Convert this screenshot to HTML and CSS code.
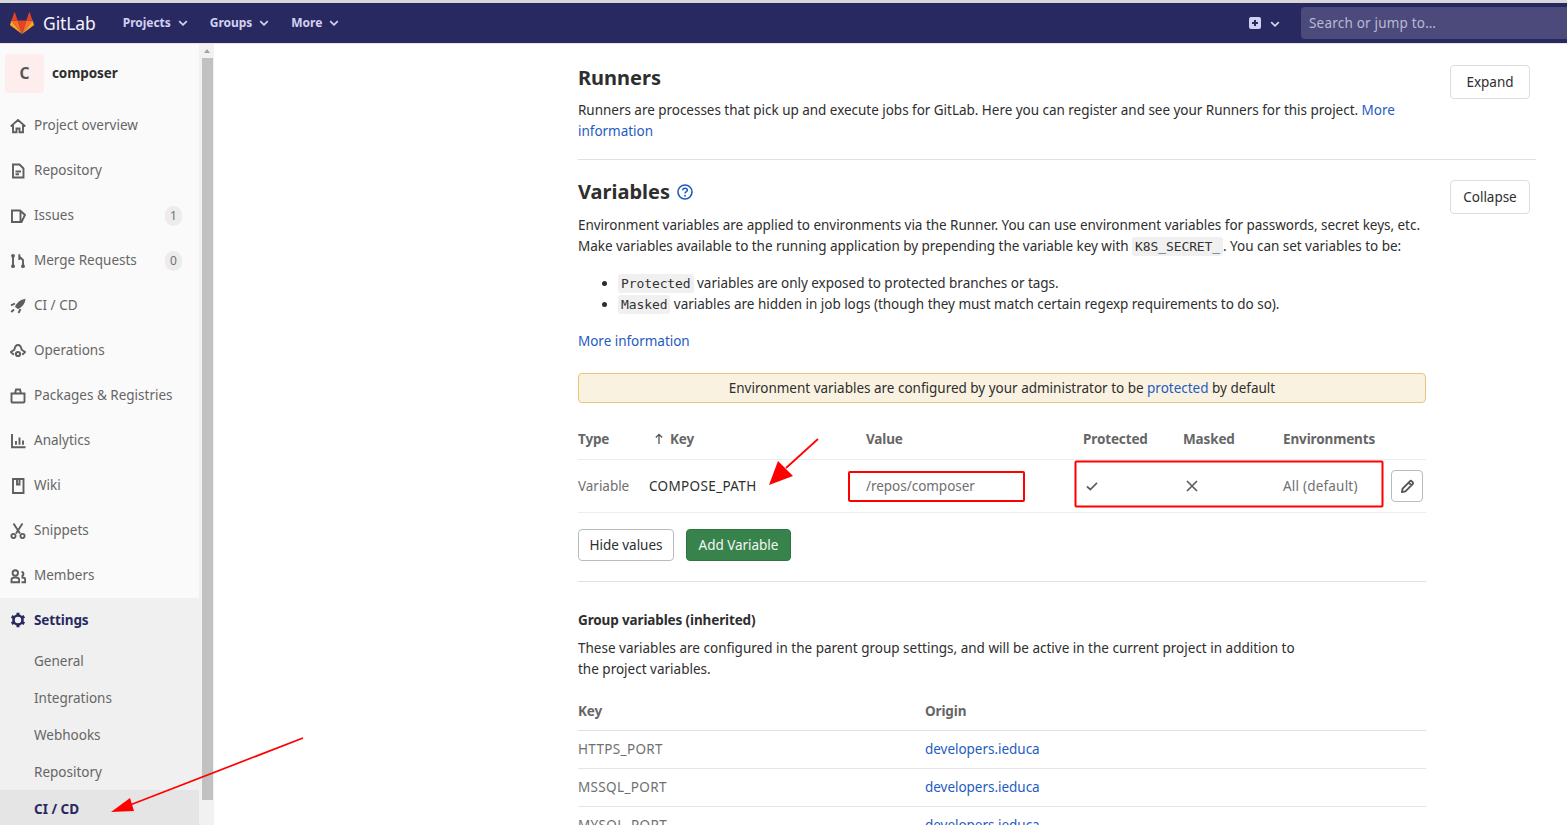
FILE: index.html
```html
<!DOCTYPE html>
<html lang="en">
<head>
<meta charset="utf-8">
<title>CI / CD Settings · composer · GitLab</title>
<link rel="stylesheet" href="styles.css">
</head>
<body>
<header class="topbar">
  <a class="brand">
    <svg class="tanuki" viewBox="0 0 24 22" width="24" height="22">
      <polygon fill="#e24329" points="12,22 16.4,8.4 7.6,8.4"/>
      <polygon fill="#fc6d26" points="12,22 7.6,8.4 1.4,8.4"/>
      <polygon fill="#fca326" points="1.4,8.4 0.1,12.5 0.5,13.6 12,22"/>
      <polygon fill="#e24329" points="1.4,8.4 7.6,8.4 4.9,0.2 4.4,0.2"/>
      <polygon fill="#fc6d26" points="12,22 16.4,8.4 22.6,8.4"/>
      <polygon fill="#fca326" points="22.6,8.4 23.9,12.5 23.5,13.6 12,22"/>
      <polygon fill="#e24329" points="22.6,8.4 16.4,8.4 19.1,0.2 19.6,0.2"/>
    </svg>
    <span class="brand-name">GitLab</span>
  </a>
  <nav class="topnav">
    <a class="topnav-item">Projects <svg class="chev" viewBox="0 0 10 6"><path d="M1.2 1.2 5 4.8l3.8-3.6"/></svg></a>
    <a class="topnav-item">Groups <svg class="chev" viewBox="0 0 10 6"><path d="M1.2 1.2 5 4.8l3.8-3.6"/></svg></a>
    <a class="topnav-item">More <svg class="chev" viewBox="0 0 10 6"><path d="M1.2 1.2 5 4.8l3.8-3.6"/></svg></a>
  </nav>
  <div class="topbar-right">
    <a class="new-menu">
      <svg class="plus" viewBox="0 0 12 12"><path fill="#d1d1f0" fill-rule="evenodd" d="M2 0h8a2 2 0 0 1 2 2v8a2 2 0 0 1-2 2H2a2 2 0 0 1-2-2V2a2 2 0 0 1 2-2zm3 3v2H3v2h2v2h2V7h2V5H7V3z"/></svg>
      <svg class="chev" viewBox="0 0 10 6"><path d="M1.2 1.2 5 4.8l3.8-3.6"/></svg>
    </a>
    <div class="search">Search or jump to…</div>
  </div>
</header>

<div class="layout">
  <aside class="sidebar">
    <div class="sidebar-inner">
      <div class="context">
        <div class="avatar">C</div>
        <div class="context-name">composer</div>
      </div>
      <ul class="menu">
        <li class="menu-item">
          <svg class="ico" viewBox="0 0 16 16"><path class="ln" d="M.7 8.400 8 2l7.300 6.400M3 7v7.200h3.500v-3.700h3V14.200H13V7"/></svg>Project overview</li>
        <li class="menu-item">
          <svg class="ico" viewBox="0 0 16 16"><path class="ln" d="M3 1.500h6.500L13.500 5.500V14.500H3zM5.500 8.500h5.500M5.500 11.300h3.500"/></svg>Repository</li>
        <li class="menu-item">
          <svg class="ico" viewBox="0 0 16 16"><path class="ln" d="M2 2.500h8L15 7l-3.500 7H2zM10.500 2.500v11.500"/></svg>Issues<span class="badge">1</span></li>
        <li class="menu-item">
          <svg class="ico" viewBox="0 0 16 16"><path class="ln" d="M3 4v8M13 6.500V12M13 7 10 4.200h-1M9.300 1.300v5.600"/><circle class="dot" cx="3" cy="2.800" r="1.900"/><circle class="dot" cx="3" cy="13.200" r="1.900"/><circle class="dot" cx="13" cy="13.200" r="1.900"/></svg>Merge Requests<span class="badge">0</span></li>
        <li class="menu-item">
          <svg class="ico" viewBox="0 0 16 16"><path class="dot" d="M5 9C6.500 4.500 10.500 1.800 15.500 .8c-.5 5-3.200 8.200-7.500 10.200z"/><path class="ln" d="M5 5.500 1 7.300M10.500 11 8.500 15M4 11.500 1.200 14"/></svg>CI / CD</li>
        <li class="menu-item">
          <svg class="ico" viewBox="0 0 16 16"><path class="ln" d="M3.800 11.800.9 9l3.400-2.200C4.800 3.800 6.200 2 8 2s3.200 1.800 3.700 4.800L15.100 9l-2.900 2.800"/><circle class="dot" cx="8" cy="11" r="3.100"/><circle class="hole" cx="8" cy="11" r="1.100"/></svg>Operations</li>
        <li class="menu-item">
          <svg class="ico" viewBox="0 0 16 16"><path class="ln" d="M1.500 5.500h13v8a1 1 0 0 1-1 1h-11a1 1 0 0 1-1-1zM5 5.500l1-4h4l1 4"/></svg>Packages &amp; Registries</li>
        <li class="menu-item">
          <svg class="ico" viewBox="0 0 16 16"><path class="ln" d="M2 1V14.200h13.500M6 8v3.800M9.500 4.500v7.300M13 7.500v4.300"/></svg>Analytics</li>
        <li class="menu-item">
          <svg class="ico" viewBox="0 0 16 16"><path class="ln" d="M3 1h10.500v14H3zM7 1v5.500h2.500V1"/></svg>Wiki</li>
        <li class="menu-item">
          <svg class="ico" viewBox="0 0 16 16"><path class="ln" d="M3.500 .5 10 10.500M12.500 .5 6 10.500"/><circle class="ring" cx="3.500" cy="13" r="2.100"/><circle class="ring" cx="12.500" cy="13" r="2.100"/></svg>Snippets</li>
        <li class="menu-item">
          <svg class="ico" viewBox="0 0 16 16"><circle class="ring" cx="5.300" cy="5" r="2.700"/><path class="ln" d="M1.500 14.300v-2.800c0-1.300 1.300-2 3.800-2s3.800.7 3.800 2v2.800zM11.500 4a1.900 1.900 0 0 1 0 3.800M11.500 9.500c2.400 0 3.700.7 3.700 2v2.800h-3.700"/></svg>Members</li>
      </ul>
      <div class="settings-group">
        <div class="menu-item menu-item-active">
          <svg class="ico" viewBox="0 0 16 16"><circle class="gear-ring" cx="8" cy="8" r="4.500"/><path class="gear-teeth" d="M8 3V.7M8 13v2.300M12.330 5.500 14.300 4.350M3.670 5.500 1.700 4.350M12.330 10.500 14.300 11.650M3.670 10.500 1.700 11.650"/></svg>Settings</div>
        <ul class="submenu">
          <li class="submenu-item">General</li>
          <li class="submenu-item">Integrations</li>
          <li class="submenu-item">Webhooks</li>
          <li class="submenu-item">Repository</li>
          <li class="submenu-item submenu-item-active">CI / CD</li>
        </ul>
      </div>
    </div>
    <div class="scrollbar">
      <div class="scroll-up"></div>
      <div class="scroll-thumb"></div>
    </div>
  </aside>

  <main class="content">
    <section class="panel panel-runners">
      <div class="panel-head">
        <div class="panel-text">
          <h2 class="panel-title">Runners</h2>
          <p class="para">Runners are processes that pick up and execute jobs for GitLab. Here you can register and see your Runners for this project. <a class="link">More<br>information</a></p>
        </div>
        <button class="btn btn-panel">Expand</button>
      </div>
    </section>

    <section class="panel panel-vars">
      <div class="panel-head">
        <div class="panel-text">
          <h2 class="panel-title">Variables
            <svg class="help" viewBox="0 0 16 16"><circle cx="8" cy="8" r="7" fill="none" stroke="#1f5cbf" stroke-width="1.600"/><path d="M5.700 6.300C5.800 5 6.800 4.300 8 4.300c1.300 0 2.300.8 2.300 1.900 0 1.800-2.300 1.700-2.300 3.300" fill="none" stroke="#1f5cbf" stroke-width="1.500"/><circle cx="8" cy="11.700" r=".95" fill="#1f5cbf"/></svg>
          </h2>
          <p class="para para-wide">Environment variables are applied to environments via the Runner. You can use environment variables for passwords, secret keys, etc.<br>Make variables available to the running application by prepending the variable key with <code class="code">K8S_SECRET_</code>. You can set variables to be:</p>
        </div>
        <button class="btn btn-panel">Collapse</button>
      </div>

      <div class="vars-body">
        <ul class="bullets">
          <li><code class="code">Protected</code> variables are only exposed to protected branches or tags.</li>
          <li><code class="code">Masked</code> variables are hidden in job logs (though they must match certain regexp requirements to do so).</li>
        </ul>
        <p class="para more"><a class="link">More information</a></p>
        <div class="alert">Environment variables are configured by your administrator to be&nbsp;<a class="link">protected</a>&nbsp;by default</div>

        <div class="vt-row vt-head">
          <div>Type</div>
          <div class="vt-key-head"><svg class="sort" viewBox="0 0 10 12"><path d="M5 11V1.500M1.800 4.500 5 1.300l3.200 3.200"/></svg>Key</div>
          <div>Value</div>
          <div>Protected</div>
          <div>Masked</div>
          <div>Environments</div>
        </div>
        <div class="vt-row vt-body">
          <div class="muted">Variable</div>
          <div class="dark caps">COMPOSE_PATH</div>
          <div class="muted">/repos/composer</div>
          <div><svg class="state" viewBox="0 0 12 12"><path d="M1 6.500 4.300 9.500 11 2.800"/></svg></div>
          <div><svg class="state" viewBox="0 0 12 12"><path d="M1 1l10 10M11 1 1 11"/></svg></div>
          <div class="muted env">All (default)</div>
          <button class="btn btn-edit"><svg class="pencil" viewBox="0 0 16 16"><path fill="none" stroke="#555" stroke-width="2" stroke-linejoin="round" d="M2 14l.8-3.800L10.500 2.500a1.500 1.500 0 0 1 2.100 0l.9.900a1.500 1.500 0 0 1 0 2.100L5.800 13.200zM9.200 3.800l3 3"/></svg></button>
        </div>
        <div class="vt-actions">
          <button class="btn btn-hide">Hide values</button>
          <button class="btn btn-add">Add Variable</button>
        </div>
        <hr class="rule">

        <h5 class="sub-title">Group variables (inherited)</h5>
        <p class="para group-text">These variables are configured in the parent group settings, and will be active in the current project in addition to<br>the project variables.</p>

        <div class="gt-row gt-head"><div>Key</div><div>Origin</div></div>
        <div class="gt-row"><div class="muted caps">HTTPS_PORT</div><a class="link">developers.ieduca</a></div>
        <div class="gt-row"><div class="muted caps">MSSQL_PORT</div><a class="link">developers.ieduca</a></div>
        <div class="gt-row"><div class="muted caps">MYSQL_PORT</div><a class="link">developers.ieduca</a></div>
      </div>
    </section>
  </main>
</div>

<svg class="annotations" viewBox="0 0 1567 825" width="1567" height="825">
  <rect class="mark" x="849" y="472" width="175" height="29" rx="1"/>
  <rect class="mark" x="1075.500" y="461.500" width="307" height="45" rx="1"/>
  <path class="arrow-line" d="M818 439 786 468"/>
  <polygon class="arrow-head" points="769,485 778,461 793,476"/>
  <path class="arrow-line" d="M303 738 130 805"/>
  <polygon class="arrow-head" points="111,812 130,798 134,811"/>
</svg>
</body>
</html>
```
FILE: styles.css
```css
* { box-sizing: border-box; }
html, body { height: 100%; }
body {
  margin: 0;
  height: 825px;
  overflow: hidden;
  background: #fff;
  color: #2e2e2e;
  font-family: "Noto Sans", "Open Sans", sans-serif;
  font-size: 13.5px;
  letter-spacing: -0.03px;
  line-height: 21px;
  display: flex;
  flex-direction: column;
}
a { text-decoration: none; }
ul { list-style: none; margin: 0; padding: 0; }
p { margin: 0; }
button { font: inherit; letter-spacing: inherit; cursor: pointer; }

/* top bar */
.topbar {
  flex: 0 0 44px;
  display: flex;
  align-items: center;
  background: #292961;
  border-top: 3px solid #d8d8d8;
  border-bottom: 1px solid #e5e5e5;
  padding-left: 10px;
}
.brand { display: flex; align-items: center; color: #f4f4fb; }
.tanuki { flex: none; display: block; }
.brand-name { margin-left: 9px; font-size: 17.5px; letter-spacing: -0.1px; }
.topnav { display: flex; margin-left: 27px; gap: 22px; }
.topnav-item {
  display: flex;
  align-items: center;
  gap: 7px;
  color: #d1d1f0;
  font-size: 12px;
  font-weight: 700;
  letter-spacing: -0.03px;
  margin-top: -2px;
}
.chev { width: 10px; height: 6px; flex: none; margin-top: 2px; }
.chev path { fill: none; stroke: #d1d1f0; stroke-width: 1.8; }
.topbar-right { margin-left: auto; display: flex; align-items: center; }
.new-menu { display: flex; align-items: center; gap: 9px; margin-right: 21px; }
.plus { width: 12px; height: 12px; display: block; }
.search {
  width: 266px;
  height: 32px;
  padding: 6px 8px;
  border-radius: 4px 0 0 4px;
  background: #4c4a7a;
  color: #b9b9d8;
  letter-spacing: 0.2px;
}

.layout { flex: 1; display: flex; min-height: 0; }

/* sidebar */
.sidebar { flex: 0 0 214px; display: flex; overflow: hidden; }
.sidebar-inner { flex: 0 0 199px; background: #fafafa; color: #666; letter-spacing: 0; }
.context { display: flex; align-items: center; height: 59px; padding: 0 0 1px 5px; }
.avatar {
  width: 39px;
  height: 39px;
  border-radius: 4px;
  background: #fdeded;
  color: #555;
  font-size: 15.5px;
  font-weight: 700;
  display: flex;
  align-items: center;
  justify-content: center;
}
.context-name { margin-left: 8px; color: #2e2e2e; font-weight: 700; letter-spacing: -0.1px; }
.menu-item {
  position: relative;
  height: 45px;
  display: flex;
  align-items: center;
  padding-left: 10px;
}
.ico { width: 16px; height: 16px; margin-right: 8px; flex: none; }
.ln, .ring { fill: none; stroke: #5e5e5e; stroke-width: 1.9; }
.dot { fill: #5e5e5e; }
.hole { fill: #fafafa; }
.gear-ring { fill: none; stroke: #292961; stroke-width: 2.6; }
.gear-teeth { fill: none; stroke: #292961; stroke-width: 3; }
.badge {
  position: absolute;
  left: 165px;
  top: 13px;
  width: 17px;
  height: 20px;
  border-radius: 9px;
  background: #ececec;
  color: #707070;
  font-size: 12px;
  line-height: 20px;
  text-align: center;
}
.settings-group { background: #f0f0f0; height: 229px; }
.menu-item-active { color: #292961; font-weight: 700; height: 44px; letter-spacing: -0.1px; }
.submenu-item { height: 37px; padding-left: 34px; line-height: 38px; }
.submenu-item-active { background: #e5e5e5; color: #292961; font-weight: 700; letter-spacing: 0; }

/* fake native scrollbar */
.scrollbar { flex: 0 0 15px; background: #f1f1f1; display: flex; flex-direction: column; align-items: center; padding-left: 1px; }
.scroll-up {
  width: 0;
  height: 0;
  margin-top: 5px;
  border-left: 3.5px solid transparent;
  border-right: 3.5px solid transparent;
  border-bottom: 4px solid #a3a3a3;
}
.scroll-thumb { width: 11px; height: 742px; margin-top: 5px; background: #c1c1c1; flex: none; }

/* main */
.content { flex: 1; min-width: 0; padding: 0 31px 0 364px; }
.panel-runners { height: 116px; border-bottom: 1px solid #e0e0e0; padding-top: 20px; }
.panel-vars { padding-top: 19px; }
.panel-head { display: flex; align-items: flex-start; justify-content: space-between; padding-right: 6px; }
.panel-text { flex: 1; min-width: 0; }
.panel-title {
  margin: 0;
  font-size: 20px;
  font-weight: 700;
  line-height: 28px;
  letter-spacing: 0;
  display: flex;
  align-items: center;
  gap: 7px;
  color: #2e2e2e;
}
.panel-runners .panel-title { margin-bottom: 8px; }
.panel-vars .panel-title { margin-bottom: 9px; margin-top: -1px; }
.panel-vars .panel-head { height: 98px; }
.panel-runners .btn-panel { margin-top: 1px; }
.panel-vars .btn-panel { margin-top: 1px; }
.para-wide { white-space: nowrap; }
.help { width: 16px; height: 16px; flex: none; margin-top: -1px; }
.link { color: #1f5cbf; }
.btn {
  background: #fff;
  border: 1px solid #ddd;
  border-radius: 4px;
  color: #2e2e2e;
  padding: 0;
}
.btn-panel { flex: none; width: 80px; height: 34px; }
.code {
  font-family: "DejaVu Sans Mono", "Liberation Mono", monospace;
  font-size: 13px;
  letter-spacing: -0.1px;
  background: #f0f0f0;
  border-radius: 3px;
  padding: 2px 3px;
  color: #333;
}

.vars-body { width: 848px; }
.bullets { list-style: disc; padding-left: 40px; margin-top: -4px; }
.bullets li { height: 21px; }
.more { margin-top: 16px; }
.alert {
  margin-top: 21px;
  height: 30px;
  display: flex;
  align-items: center;
  justify-content: center;
  background: #faf2e1;
  border: 1px solid #e9c47d;
  border-radius: 4px;
  color: #2e2e2e;
  letter-spacing: -0.01px;
}

.vt-row { display: grid; grid-template-columns: 71px 217px 217px 100px 100px 108px 35px; align-items: center; }
.vt-head {
  height: 57px;
  padding-top: 16px;
  border-bottom: 1px solid #ededed;
  color: #666;
  font-weight: 700;
  letter-spacing: -0.13px;
}
.vt-key-head { display: flex; align-items: center; gap: 6px; padding-left: 5px; }
.sort { width: 10px; height: 12px; flex: none; }
.sort path { fill: none; stroke: #555; stroke-width: 1.3; }
.vt-body { height: 53px; border-bottom: 1px solid #ededed; }
.muted { color: #707070; }
.dark { color: #2e2e2e; }
.caps { letter-spacing: 0.35px; }
.env { letter-spacing: 0.2px; }
.state { width: 12px; height: 12px; display: block; margin-left: 3px; }
.state path { fill: none; stroke: #5e5e5e; stroke-width: 1.7; }
.btn-edit { width: 32px; height: 32px; border-color: #bbb; display: flex; align-items: center; justify-content: center; }
.pencil { width: 15px; height: 15px; }
.vt-actions { display: flex; gap: 12px; padding-top: 16px; }
.btn-hide { width: 96px; height: 32px; border-color: #bbb; }
.btn-add { width: 105px; height: 32px; background: #38824c; border-color: #2f7343; color: #f2f7f3; }
.rule { margin: 20px 0 0; border: 0; border-top: 1px solid #e0e0e0; }
.sub-title { margin: 28px 0 0; font-size: 13.5px; font-weight: 700; line-height: 20px; letter-spacing: -0.13px; }
.group-text { margin-top: 8px; white-space: nowrap; letter-spacing: 0; }
.gt-row { display: grid; grid-template-columns: 347px 1fr; align-items: center; height: 38px; border-bottom: 1px solid #e5e5e5; }
.gt-head { height: 51px; padding-top: 13px; color: #666; font-weight: 700; letter-spacing: -0.13px; border-bottom-color: #e0e0e0; }

/* red annotations drawn over the screenshot */
.annotations { position: absolute; left: 0; top: 0; pointer-events: none; }
.mark { fill: none; stroke: #f00; stroke-width: 2; }
.arrow-line { stroke: #f00; stroke-width: 1.7; fill: none; }
.arrow-head { fill: #f00; }
```
